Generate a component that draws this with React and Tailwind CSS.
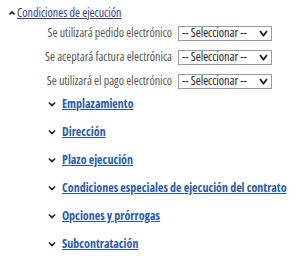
const fields = [
  'Se utilizará pedido electrónico',
  'Se aceptará factura electrónica',
  'Se utilizará el pago electrónico',
];

const sections = [
  'Emplazamiento',
  'Dirección',
  'Plazo ejecución',
  'Condiciones especiales de ejecución del contrato',
  'Opciones y prórrogas',
  'Subcontratación',
];

const Chevron = ({ up }) => (
  <svg width="8" height="6" viewBox="0 0 8 6" className="shrink-0">
    <path
      d={up ? 'M1.5 4.5 L4 2 L6.5 4.5' : 'M1 1.5 L4 4.5 L7 1.5'}
      fill="none"
      stroke="#222"
      strokeWidth="1.7"
    />
  </svg>
);

export default function App() {
  return (
    <div className="w-[300px] h-[258px] bg-white font-['Open_Sans',sans-serif] font-stretch-condensed">
      {/* header */}
      <div className="flex items-center gap-[1px] pl-[8px] h-[26px]">
        <Chevron up />
        <a className="text-[12px] text-[#34408c] underline leading-none">Condiciones de ejecución</a>
      </div>

      {/* fields */}
      <div className="flex flex-col mt-[-5px]">
        {fields.map((f) => (
          <div key={f} className="flex items-center h-[24px]">
            <span className="w-[172px] text-right text-[12px] text-[#555] whitespace-nowrap">{f}</span>
            <div className="ml-[6px] w-[94px] h-[15px] border border-[#9a9a9a] flex items-center justify-between pl-[3px] pr-[3px]">
              <span className="text-[12px] text-[#222] leading-none">-- Seleccionar --</span>
              <svg width="9" height="7" viewBox="0 0 9 7">
                <path d="M1 1 L4.5 5.5 L8 1" fill="none" stroke="#1a1a1a" strokeWidth="1.8" />
              </svg>
            </div>
          </div>
        ))}
      </div>

      {/* sections */}
      <div className="flex flex-col pl-[48px] mt-[-3px]">
        {sections.map((s) => (
          <div key={s} className="flex items-center gap-[6px] h-[28px]">
            <Chevron />
            <a className="text-[12px] font-bold text-[#2c5aa8] underline leading-none whitespace-nowrap">{s}</a>
          </div>
        ))}
      </div>
    </div>
  );
}
